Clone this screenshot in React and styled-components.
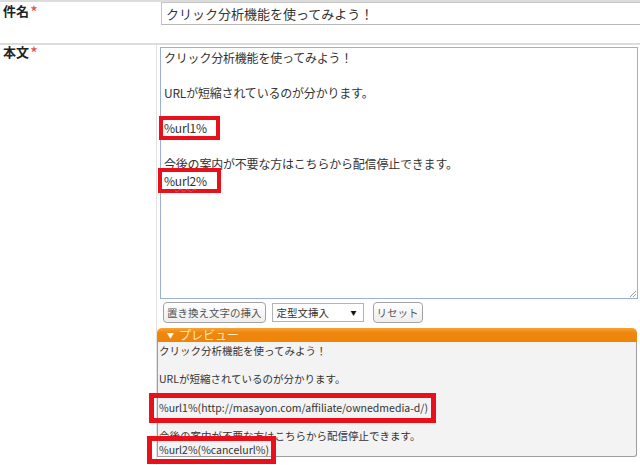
import React from "react";
import styled, { createGlobalStyle } from "styled-components";

const GlobalStyle = createGlobalStyle`
  html, body {
    margin: 0;
    padding: 0;
    background: #fff;
  }
  body {
    width: 640px;
    height: 465px;
    overflow: hidden;
    font-family: "Noto Sans CJK JP", "Noto Sans", sans-serif;
    color: #333;
  }
`;

const Page = styled.div`
  width: 640px;
  height: 465px;
  overflow: hidden;
`;

const Row = styled.div`
  display: flex;
  border-top: 2px solid #dcdcdc;
  height: ${(p) => p.$height}px;
`;

const Label = styled.div`
  box-sizing: border-box;
  width: 157px;
  flex: none;
  padding: ${(p) => p.$top}px 0 0 3px;
  font-size: 13px;
  line-height: 14px;
  font-weight: bold;
  color: #222;
  border-right: 1px solid ${(p) => (p.$divider ? "#e2e2e2" : "transparent")};
`;

const Req = styled.span`
  color: #e2504a;
  font-weight: normal;
  font-size: 17px;
  line-height: 0;
  margin-left: 1px;
  vertical-align: -3px;
`;

const Field = styled.div`
  flex: 1;
  min-width: 0;
  padding: ${(p) => p.$pad};
  display: flex;
  flex-direction: column;
  align-items: flex-start;
`;

const SubjectInput = styled.div`
  box-sizing: border-box;
  width: 500px;
  height: 23px;
  border: 1px solid #c4c4c4;
  border-bottom-color: #b8b8b8;
  padding: 0 4px;
  font-size: 13px;
  line-height: 21px;
  color: #333;
  background: #fff;
`;

const BodyArea = styled.div`
  position: relative;
  box-sizing: border-box;
  width: 478px;
  height: 252px;
  margin-left: 3px;
  border: 1px solid #9cafdb;
  padding: 1px 3px;
  font-size: 12px;
  line-height: 17.6px;
  letter-spacing: -0.2px;
  color: #333;
  background: #fff;
`;

const Line = styled.div`
  min-height: ${(p) => p.$lh}px;
  white-space: nowrap;
`;

const Grip = styled.svg`
  position: absolute;
  right: 0;
  bottom: 0;
`;

const Spell = styled.span`
  text-decoration: underline wavy #e24b6a;
  text-decoration-thickness: 1px;
  text-underline-offset: 2px;
`;

const Mark = styled.span`
  display: inline-block;
  border: ${(p) => p.$bw}px solid #e8101a;
  padding: ${(p) => p.$pad};
  margin: ${(p) => p.$margin};
  line-height: ${(p) => p.$lh}px;
`;

const Tools = styled.div`
  display: flex;
  align-items: center;
  margin: 3px 0 0 6px;
  height: 21px;
`;

const Button = styled.div`
  box-sizing: border-box;
  height: 21px;
  margin-left: ${(p) => p.$ml || 0}px;
  padding: 0 3px;
  border: 1px solid #a3a3a3;
  border-radius: 4px;
  background: linear-gradient(#ffffff, #eeeeee);
  font-size: 10.5px;
  line-height: 19px;
  color: #555;
  white-space: nowrap;
`;

const Select = styled.div`
  box-sizing: border-box;
  display: flex;
  align-items: center;
  justify-content: space-between;
  width: 92px;
  height: 19px;
  margin-left: 6px;
  padding: 0 6px 0 4px;
  border: 1px solid #b3b3b3;
  background: #fff;
  font-size: 10.5px;
  color: #333;
`;

const Caret = styled.span`
  font-size: 6px;
  color: #111;
`;

const PreviewHead = styled.div`
  box-sizing: border-box;
  width: 480px;
  height: 14px;
  margin-top: 5px;
  padding-left: 10px;
  border-radius: 5px 5px 0 0;
  background: linear-gradient(#f7a23a, #f0860c 35%, #ee840a);
  font-size: 12px;
  line-height: 14px;
  color: #fde7c4;
  display: flex;
  align-items: center;
  gap: 5px;
`;

const HeadArrow = styled.span`
  font-size: 7px;
  color: #fff;
`;

const Preview = styled.div`
  box-sizing: border-box;
  width: 480px;
  height: 115px;
  padding: 2px 0 0 1px;
  border: 1px solid #9e9e9e;
  border-top: none;
  border-bottom-right-radius: 3px;
  background: #f3f3f3;
  font-size: 10.5px;
  line-height: 14.2px;
  color: #333;
`;

const bodyLines = [
  "クリック分析機能を使ってみよう！",
  "",
  "URLが短縮されているのが分かります。",
  "",
];

const previewLines = [
  "クリック分析機能を使ってみよう！",
  "",
  "URLが短縮されているのが分かります。",
  "",
];

const Resize = () => (
  <Grip width="8" height="8" viewBox="0 0 8 8">
    <path d="M7 1 L1 7 M7 4 L4 7" stroke="#9a9a9a" strokeWidth="1" />
  </Grip>
);

const App = () => (
  <Page>
    <GlobalStyle />
    <Row $height={41}>
      <Label $top={2}>
        件名<Req>*</Req>
      </Label>
      <Field $pad="0 0 0 4px">
        <SubjectInput>クリック分析機能を使ってみよう！</SubjectInput>
      </Field>
    </Row>
    <Row $height={420}>
      <Label $top={0} $divider>
        本文<Req>*</Req>
      </Label>
      <Field $pad="2px 0 0 0">
        <BodyArea>
          {bodyLines.map((text, i) => (
            <Line key={i} $lh={17.6}>
              {text}
            </Line>
          ))}
          <Line $lh={17.6}>
            <Mark $bw={4} $lh={16} $pad="0 9px 0 1px" $margin="-4px 0 -4px -5px">
              %url1%
            </Mark>
          </Line>
          <Line $lh={17.6} />
          <Line $lh={17.6}>今後の案内が不要な方はこちらから配信停止できます。</Line>
          <Line $lh={17.6}>
            <Mark $bw={4} $lh={17} $pad="0 10px 0 2px" $margin="-4px 0 -4px -6px">
              %<Spell>url2</Spell>%
            </Mark>
          </Line>
          <Resize />
        </BodyArea>
        <Tools>
          <Button>置き換え文字の挿入</Button>
          <Select>
            定型文挿入
            <Caret>▼</Caret>
          </Select>
          <Button $ml={9}>リセット</Button>
        </Tools>
        <PreviewHead>
          <HeadArrow>▼</HeadArrow>
          プレビュー
        </PreviewHead>
        <Preview>
          {previewLines.map((text, i) => (
            <Line key={i} $lh={14.2}>
              {text}
            </Line>
          ))}
          <Line $lh={14.2}>
            <Mark $bw={5} $lh={14} $pad="3px 3px 3px 5px" $margin="-8px 0 -8px -10px">
              %url1%(http://masayon.com/affiliate/ownedmedia-d/)
            </Mark>
          </Line>
          <Line $lh={14.2} />
          <Line $lh={14.2}>今後の案内が不要な方はこちらから配信停止できます。</Line>
          <Line $lh={14.2}>
            <Mark $bw={5} $lh={14} $pad="2px 2px 2px 7px" $margin="-7px 0 -7px -12px">
              %url2%(%cancelurl%)
            </Mark>
          </Line>
        </Preview>
      </Field>
    </Row>
  </Page>
);

export default App;
